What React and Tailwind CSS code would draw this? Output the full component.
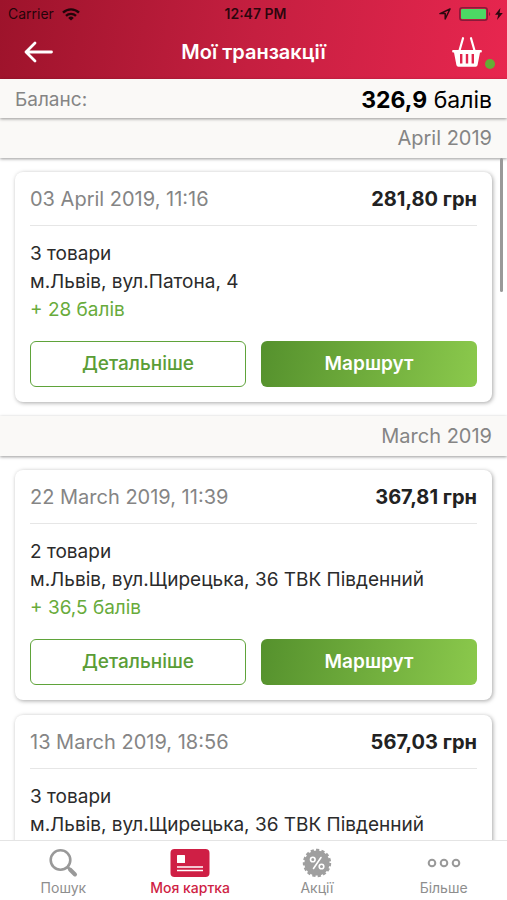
import React from "react";

const sections = [
  {
    title: "April 2019",
    items: [
      {
        date: "03 April 2019, 11:16",
        sum: "281,80 грн",
        goods: "3 товари",
        address: "м.Львів, вул.Патона, 4",
        points: "+ 28 балів",
      },
    ],
  },
  {
    title: "March 2019",
    items: [
      {
        date: "22 March 2019, 11:39",
        sum: "367,81 грн",
        goods: "2 товари",
        address: "м.Львів, вул.Щирецька, 36 ТВК Південний",
        points: "+ 36,5 балів",
      },
      {
        date: "13 March 2019, 18:56",
        sum: "567,03 грн",
        goods: "3 товари",
        address: "м.Львів, вул.Щирецька, 36 ТВК Південний",
        points: "+ 56,5 балів",
      },
    ],
  },
];

const StatusBar = () => (
  <div className="grid grid-cols-3 items-center h-7 pl-2 pr-1 text-sm text-black/80">
    <div className="flex items-center gap-2">
      <span>Carrier</span>
      <svg width="18" height="13" viewBox="0 0 18 13" fill="none" stroke="currentColor" strokeWidth="2.4">
        <path d="M1 4.6a11.5 11.5 0 0 1 16 0" />
        <path d="M4 7.9a7.2 7.2 0 0 1 10 0" />
        <path d="M9 12.6 6.2 9.9a4 4 0 0 1 5.6 0z" fill="currentColor" stroke="none" />
      </svg>
    </div>
    <span className="text-center font-semibold">12:47 PM</span>
    <div className="flex items-center justify-end gap-2">
      <svg width="12" height="12" viewBox="0 0 12 12" fill="none" stroke="currentColor" strokeWidth="1.5" strokeLinejoin="round">
        <path d="M11 1 1 5.6h5.2V11z" />
      </svg>
      <div className="flex items-center gap-1">
        <svg width="32" height="14" viewBox="0 0 32 14">
          <rect x="0.8" y="0.8" width="27.4" height="12.4" rx="2.5" fill="none" stroke="#8a1a39" strokeWidth="1.5" />
          <rect x="2" y="2" width="25" height="10" rx="1.2" fill="#4cd964" />
          <path d="M30 5v4c1.6-.6 1.6-3.4 0-4z" fill="#8a1a39" />
        </svg>
        <svg width="8" height="12" viewBox="0 0 8 12" fill="currentColor">
          <path d="M5.4 0 0 6.8h3.2L2 12l5.8-7H4.6z" />
        </svg>
      </div>
    </div>
  </div>
);

const Header = () => (
  <header className="shrink-0 bg-[linear-gradient(100deg,#9d132b_0%,#c51f40_50%,#e8264f_100%)] pb-[3px]">
    <StatusBar />
    <div className="grid grid-cols-[1fr_auto_1fr] items-center h-12 px-3">
      <button type="button" aria-label="Назад" className="justify-self-start p-3 text-white">
        <svg width="29" height="22" viewBox="0 0 29 22" fill="none" stroke="currentColor" strokeWidth="2.8" strokeLinecap="round" strokeLinejoin="round">
          <path d="M27.5 11H2M11 2 2 11l9 9" />
        </svg>
      </button>
      <h1 className="text-xl font-semibold text-white">Мої транзакції</h1>
      <button type="button" aria-label="Кошик" className="flex items-end justify-self-end gap-[3px] text-white">
        <svg width="30" height="30" viewBox="0 0 30 30">
          <path
            fill="currentColor"
            fillRule="evenodd"
            d="M1 13h28a.8.8 0 0 1 .8.8v1a.8.8 0 0 1-.8.8h-1L25.6 28a2 2 0 0 1-2 1.7H6.4a2 2 0 0 1-2-1.7L2 15.6H1a.8.8 0 0 1-.8-.8v-1A.8.8 0 0 1 1 13zM8 17v9.5h2.4V17zM13.8 17v9.5h2.4V17zM19.6 17v9.5H22V17z"
          />
          <path d="M7.5 13.5 11 1.2M22.5 13.5 19 1.2" fill="none" stroke="currentColor" strokeWidth="2.2" strokeLinecap="round" />
        </svg>
        <span className="-mb-[2px] size-[10px] rounded-full bg-[#64ad35]" />
      </button>
    </div>
  </header>
);

const Card = ({ item }) => (
  <article className="rounded-lg bg-white px-[15px] pb-[15px] shadow-[1px_1px_4px_rgba(0,0,0,0.35)]">
    <div className="flex h-[54px] items-center justify-between border-b border-[#e6e6e6] text-xl">
      <span className="text-[#858585]">{item.date}</span>
      <span className="font-bold text-[#222]">{item.sum}</span>
    </div>
    <div className="pt-[14px] pb-[17px] text-[19px] leading-7 text-[#2b2b2b]">
      <p>{item.goods}</p>
      <p className="whitespace-nowrap">{item.address}</p>
      <p className="text-[#68ab3b]">{item.points}</p>
    </div>
    <div className="grid grid-cols-2 gap-[15px] text-[19px]">
      <button type="button" className="h-[46px] rounded-md border border-[#5fa33a] font-medium text-[#5a9d36]">
        Детальніше
      </button>
      <button
        type="button"
        className="h-[46px] rounded-md bg-[linear-gradient(100deg,#55912d,#8bc94c)] font-semibold text-white"
      >
        Маршрут
      </button>
    </div>
  </article>
);

const tabs = [
  {
    label: "Пошук",
    icon: (
      <svg width="30" height="30" viewBox="0 0 30 30" fill="none" stroke="#999">
        <circle cx="12.5" cy="12" r="9.8" strokeWidth="2.6" />
        <path d="M19.5 19l2.5 2.5" strokeWidth="2.6" />
        <path d="M22 21.5l5 5" strokeWidth="4" strokeLinecap="round" />
      </svg>
    ),
  },
  {
    label: "Моя картка",
    active: true,
    icon: (
      <svg width="40" height="30" viewBox="0 0 40 30">
        <rect x="0.5" y="1" width="39" height="28" rx="4" fill="currentColor" />
        <rect x="7" y="7" width="8" height="8" rx="0.5" fill="#fff" />
        <path d="M7 19h26M7 22.5h26" stroke="#fff" strokeWidth="1.6" />
      </svg>
    ),
  },
  {
    label: "Акції",
    icon: (
      <svg width="30" height="30" viewBox="0 0 30 30">
        <circle cx="15" cy="15" r="12.6" fill="#9f9f9f" />
        <circle cx="15" cy="15" r="12.9" fill="none" stroke="#9f9f9f" strokeWidth="2.6" strokeDasharray="3.2 2.204" />
        <g fill="none" stroke="#fff" strokeWidth="1.6" strokeLinecap="round">
          <circle cx="10.8" cy="11.5" r="2.3" />
          <circle cx="19.5" cy="18.5" r="2.3" />
          <path d="M19 9.5l-7.500 11" />
        </g>
      </svg>
    ),
  },
  {
    label: "Більше",
    icon: (
      <svg width="34" height="30" viewBox="0 0 34 30" fill="none" stroke="#999" strokeWidth="2">
        <circle cx="5" cy="15" r="3.3" />
        <circle cx="17" cy="15" r="3.3" />
        <circle cx="29" cy="15" r="3.3" />
      </svg>
    ),
  },
];

const TabBar = () => (
  <nav className="z-10 grid h-[60px] shrink-0 grid-cols-4 border-t border-[#e4e4e4] bg-white">
    {tabs.map((tab) => (
      <a
        key={tab.label}
        href="#"
        className={`flex flex-col items-center pt-[7px] text-sm ${
          tab.active ? "font-medium text-[#cf1f45]" : "text-[#8e8e8e]"
        }`}
      >
        {tab.icon}
        <span>{tab.label}</span>
      </a>
    ))}
  </nav>
);

export default function App() {
  return (
    <div className="flex h-screen flex-col bg-white font-[Inter,'Liberation_Sans',sans-serif]">
      <Header />
      <div className="z-10 flex h-[39px] shrink-0 items-center justify-between bg-[#faf9f7] px-[15px] pt-[3px] shadow-[0_1px_3px_rgba(0,0,0,0.4)]">
        <span className="text-[19px] text-[#858585]">Баланс:</span>
        <span className="text-[23px] text-black">
          <b>326,9</b> балів
        </span>
      </div>
      <div className="relative flex min-h-0 flex-1 flex-col">
        <main className="min-h-0 flex-1 overflow-y-auto [scrollbar-width:none]">
          {sections.map((section) => (
            <section key={section.title}>
              <h2 className="flex h-10 items-center justify-end bg-[#faf9f7] px-[15px] text-xl text-[#858585] shadow-[0_1px_3px_rgba(0,0,0,0.4)]">
                {section.title}
              </h2>
              <div className="flex flex-col gap-[15px] px-[15px] py-[14px]">
                {section.items.map((item) => (
                  <Card key={item.date} item={item} />
                ))}
              </div>
            </section>
          ))}
        </main>
        {/* scroll position */}
        <div className="absolute top-10 right-1 h-[134px] w-[3px] rounded-full bg-[#999]" />
      </div>
      <TabBar />
    </div>
  );
}
